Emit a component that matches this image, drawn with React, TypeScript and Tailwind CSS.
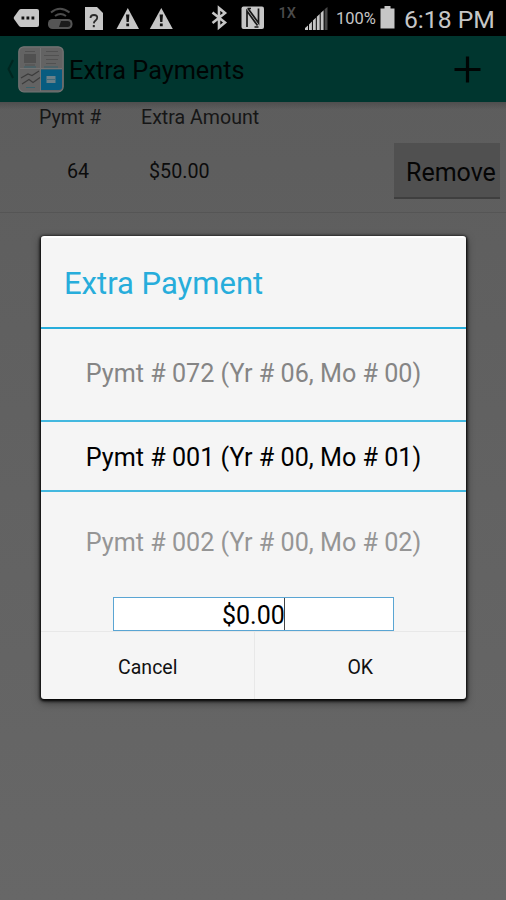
import { useState } from 'react'

type ExtraPayment = {
  pymt: number
  amount: string
}

const PERIODS = [
  'Pymt # 072 (Yr # 06, Mo # 00)',
  'Pymt # 001 (Yr # 00, Mo # 01)',
  'Pymt # 002 (Yr # 00, Mo # 02)',
]

function StatusBar() {
  return (
    <div className="flex h-9 shrink-0 bg-black">
      <svg width="334" height="36" viewBox="0 0 334 36" className="shrink-0" fill="#c6c6c6">
        {/* message tag */}
        <path d="M21 9h16q2 0 2 2v14q0 2-2 2H21q-1 0-2-1l-5-7q-.6-1 0-2l5-7q1-1 2-1z" />
        <g fill="#111">
          <rect x="21.5" y="16.5" width="2.8" height="3" />
          <rect x="26.5" y="16.5" width="2.8" height="3" />
          <rect x="31.5" y="16.5" width="2.8" height="3" />
        </g>
        {/* wifi calling */}
        <g fill="none" stroke="#4c4c4c" strokeWidth="2">
          <path d="M51 12.5q9-7.500 18.500 0" />
          <path d="M55 16q5.500-4 11 0" />
        </g>
        <rect x="48" y="19" width="24.500" height="10" rx="4.500" fill="#555" />
        <path d="M61 21h6.500q3 0 3 3t-3 3H59z" fill="#1c1c1c" />
        {/* sim card */}
        <path d="M85 7h12l6 6v17H85z" />
        <path d="M90.500 18q0-3 3.500-3t3.200 2.800q0 1.500-1.600 2.600t-1.800 3" fill="none" stroke="#2a2a2a" strokeWidth="1.800" />
        <rect x="92.800" y="25" width="2" height="2.200" fill="#2a2a2a" />
        {/* warnings */}
        <path d="M127.800 8l11.200 21h-22.500z" />
        <path d="M126 14.500h3.400l-.6 7.500h-2.200zM126.300 23.400h2.800v2.800h-2.800z" fill="#111" />
        <path d="M161.300 8l11.500 21h-23z" />
        <path d="M159.600 14.500h3.400l-.6 7.500h-2.200zM159.900 23.400h2.800v2.800h-2.800z" fill="#111" />
        {/* bluetooth */}
        <path d="M212.500 12.500l12.500 10-6 5V8l6 5-12.500 10" fill="none" stroke="#c6c6c6" strokeWidth="2.600" />
        {/* nfc */}
        <rect x="241.500" y="6.500" width="22.500" height="22.500" rx="2" />
        <path d="M247 27V11l10.500 14.500M248 8.500L258.500 23V8.500" fill="none" stroke="#181818" strokeWidth="1.700" />
        <path d="M247.500 8.500h3.500M254.500 27h4" fill="none" stroke="#181818" strokeWidth="1.500" />
        <text x="278.500" y="18" fontSize="14.500" fontWeight="500" fontFamily="Roboto, sans-serif" fill="#4c4c4c">1X</text>
        {/* signal */}
        <path d="M305 30v-2l3-2.600V30zM309 30v-5.600l2.900-2.800V30zM312.900 30v-9.400l2.900-2.800V30zM316.800 30V16.800l2.900-2.800V30zM320.700 30V13l2.900-2.800V30z" />
        <path d="M324.600 30V9.300L327.500 7v23z" fill="#484848" />
      </svg>
      <div className="flex flex-1 items-center text-[#c6c6c6]">
        <span className="ml-[2px] w-[41px] whitespace-nowrap pt-[3px] text-[16.500px] leading-none">100%</span>
        <svg width="15" height="36" viewBox="0 0 15 36" className="ml-[3px] shrink-0" fill="#c6c6c6">
          <path d="M4.500 6h6v2.500H14.500V28.500H0.500V8.500h4z" />
        </svg>
        <span className="ml-[9px] whitespace-nowrap pt-[4px] text-[24.700px] leading-none">6:18 PM</span>
      </div>
    </div>
  )
}

function AppIcon() {
  return (
    <svg width="46" height="47" viewBox="0 0 46 47" className="shrink-0">
      <rect x="0.800" y="0.800" width="44.400" height="45" rx="5" fill="#636363" stroke="#747474" strokeWidth="1.200" />
      <path d="M22.500 2v43M2 22.500h42" stroke="#737373" />
      <rect x="6" y="8" width="12" height="9" fill="#505050" />
      <path d="M7 5.500h10M7 19h10" stroke="#515151" />
      <path d="M28 5.500h12M26 9.500h15M28 13.500h12M28 17.500h10" stroke="#515151" />
      <path d="M6 21h12M26 21h14" stroke="#39616a" />
      <path d="M3 32l7-4 4 1.500 7-4.500M4 38l7-4.500 4 3 7-5" fill="none" stroke="#3c3c3c" strokeWidth="1.200" />
      <path d="M8 41.500h9" stroke="#39616a" />
      <path d="M23 23.500h21V41q0 3-3 3H23z" fill="#075c80" />
      <rect x="28.500" y="30" width="9" height="7" fill="#6b8088" />
      <path d="M28.500 33.500h9" stroke="#426c7c" />
    </svg>
  )
}

function ActionBar() {
  return (
    <header className="flex h-[66px] shrink-0 items-center bg-[#00362f]">
      <svg width="18" height="24" viewBox="0 0 18 24" className="shrink-0">
        <path d="M13 3L8.500 12l4.500 9" fill="none" stroke="#002620" strokeWidth="2" />
      </svg>
      <AppIcon />
      <h1 className="ml-[5px] flex-1 whitespace-nowrap pt-[4px] text-[25.300px] leading-none text-[#000504]">
        Extra Payments
      </h1>
      <button aria-label="Add" className="mr-[25px]">
        <svg width="27" height="27" viewBox="0 0 27 27">
          <path d="M13.500 0.500v26M0.500 13.500h26" stroke="#000504" strokeWidth="3.200" />
        </svg>
      </button>
    </header>
  )
}

function PaymentRow({ payment, onRemove }: { payment: ExtraPayment; onRemove: () => void }) {
  return (
    <div className="flex h-20 items-center border-b border-[#555] pb-[3px] text-[19.700px] text-[#0c0c0c]">
      <span className="ml-[67px] w-[82px] pt-[2px]">{payment.pymt}</span>
      <span className="flex-1 pt-[2px]">{payment.amount}</span>
      <button
        onClick={onRemove}
        className="mr-[6px] h-14 w-[106px] whitespace-nowrap border-b-2 border-[#3f3f3f] bg-[#505050] pt-[5px] pl-[12px] text-left text-[25px] text-[#060606]"
      >
        Remove
      </button>
    </div>
  )
}

function ExtraPaymentDialog() {
  const [amount, setAmount] = useState('$0.00')

  return (
    <div className="flex h-[463px] w-[425px] flex-col rounded-[3px] border-t-2 border-white bg-[#f5f5f5] shadow-[0_1px_3px_1px_#000,0_3px_8px_#0008]">
      <h2 className="flex h-[91px] items-center border-b-2 border-[#27addb] pt-[4px] pl-[23px] text-[31px] text-[#27addb]">
        Extra Payment
      </h2>

      {/* picker wheel */}
      <div className="flex flex-col text-center text-[25.150px] leading-none">
        <div className="flex h-[91px] items-center justify-center pb-[2px] text-[#858585]">{PERIODS[0]}</div>
        <div className="flex h-[72px] items-center justify-center border-y-2 border-[#43b8df] pt-[4px] text-black">
          {PERIODS[1]}
        </div>
        <div className="flex h-[105px] items-center justify-center pb-[4px] text-[#959595]">{PERIODS[2]}</div>
      </div>

      <div className="mr-auto ml-[72px] flex h-[34px] w-[281px] items-center justify-center border border-[#5aa5d3] bg-white">
        <input
          value={amount}
          onChange={e => setAmount(e.target.value)}
          className="h-full w-[63px] border-r border-[#444] pt-[3px] text-[25px] leading-none text-black outline-none"
        />
      </div>

      <div className="flex flex-1 border-t border-[#e8e8e8] text-[19.500px] text-[#111]">
        <button className="flex-1 border-r border-[#e8e8e8] pt-[4px] pl-px">Cancel</button>
        <button className="flex-1 pt-[4px]">OK</button>
      </div>
    </div>
  )
}

export default function App() {
  const [payments, setPayments] = useState<ExtraPayment[]>([{ pymt: 64, amount: '$50.00' }])

  return (
    <div className="relative flex h-[900px] w-[506px] flex-col overflow-hidden bg-linear-to-b from-[#5c5c5c] to-[#676767] font-['Roboto',sans-serif]">
      <StatusBar />
      <ActionBar />

      <main className="flex flex-col">
        <div className="flex h-[31px] items-center bg-linear-to-b from-[#4e4e4e] to-transparent to-25% pt-px text-[19.600px] text-[#161616]">
          <span className="ml-[39px] w-[102px]">Pymt #</span>
          <span>Extra Amount</span>
        </div>
        {payments.map(p => (
          <PaymentRow
            key={p.pymt}
            payment={p}
            onRemove={() => setPayments(payments.filter(x => x.pymt !== p.pymt))}
          />
        ))}
      </main>

      <div className="absolute inset-0 flex items-start pt-[236px] pl-[41px]">
        <ExtraPaymentDialog />
      </div>
    </div>
  )
}
